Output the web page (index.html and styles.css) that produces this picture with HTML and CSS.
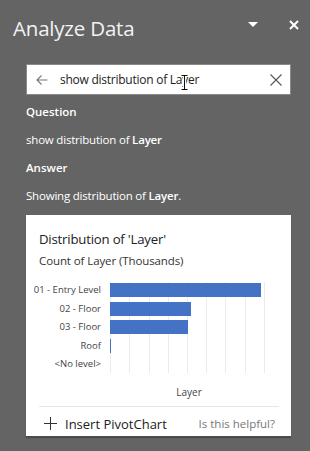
FILE: index.html
```html
<!DOCTYPE html>
<html lang="en">
<head>
    <meta charset="UTF-8">
    <title>Analyze Data</title>
    <link rel="stylesheet" href="styles.css">
</head>
<body>
    <div class="pane">
        <div class="pane-header">
            <h1 class="pane-title">Analyze Data</h1>
            <span class="caret"></span>
            <svg class="close" width="10" height="10" viewBox="0 0 10 10">
                <path d="M1 1 L9 9 M9 1 L1 9" stroke="#fff" stroke-width="2"/>
            </svg>
        </div>

        <div class="search">
            <svg class="search-back" width="12" height="10" viewBox="0 0 12 10">
                <path d="M11.5 5 H1 M5.5 0.5 L1 5 L5.5 9.5" stroke="#777" stroke-width="1.1" fill="none"/>
            </svg>
            <span class="search-text">show distribution of Layer</span>
            <svg class="search-clear" width="12" height="12" viewBox="0 0 12 12">
                <path d="M0.5 0.5 L11.5 11.5 M11.5 0.5 L0.5 11.5" stroke="#555" stroke-width="1.1"/>
            </svg>
            <!-- mouse cursor over the text -->
            <svg class="ibeam" width="7" height="15" viewBox="0 0 7 15">
                <path d="M0 0.5 H7 M0 14.5 H7 M3.5 0.5 V14.5" stroke="#fff" stroke-width="3"/>
                <path d="M0.5 0.5 H6.5 M0.5 14.5 H6.5 M3.5 0.5 V14.5" stroke="#111" stroke-width="1"/>
            </svg>
        </div>

        <div class="qa">
            <p class="qa-label">Question</p>
            <p class="qa-text">show distribution of <b>Layer</b></p>
            <p class="qa-label">Answer</p>
            <p class="qa-text">Showing distribution of <b>Layer</b>.</p>
        </div>

        <div class="card">
            <div class="card-title">Distribution of 'Layer'</div>
            <div class="card-subtitle">Count of Layer (Thousands)</div>

            <div class="chart">
                <div class="chart-labels">
                    <span>01 - Entry Level</span>
                    <span>02 - Floor</span>
                    <span>03 - Floor</span>
                    <span>Roof</span>
                    <span>&lt;No level&gt;</span>
                </div>
                <div class="chart-plot">
                    <div class="bar-row"><div class="bar" style="width: 151px"></div></div>
                    <div class="bar-row"><div class="bar" style="width: 81px"></div></div>
                    <div class="bar-row"><div class="bar" style="width: 78px"></div></div>
                    <div class="bar-row"><div class="bar" style="width: 1px"></div></div>
                    <div class="bar-row"></div>
                </div>
            </div>
            <div class="axis-title">Layer</div>

            <div class="card-footer">
                <span class="insert">
                    <svg width="13" height="13" viewBox="0 0 13 13">
                        <path d="M6.5 0 V13 M0 6.5 H13" stroke="#333" stroke-width="1"/>
                    </svg>
                    Insert PivotChart
                </span>
                <span class="helpful">Is this helpful?</span>
            </div>
        </div>
    </div>
</body>
</html>
```

FILE: styles.css
```css
* {
    margin: 0;
    padding: 0;
    box-sizing: border-box;
}

body {
    font-family: 'Open Sans', 'Noto Sans', sans-serif;
    background: #646464;
    width: 310px;
    height: 451px;
    overflow: hidden;
    color: #fff;
}

.pane-header {
    display: flex;
    align-items: center;
    height: 56px;
    padding: 0 11px 0 13px;
}

.pane-title {
    flex: 1;
    font-size: 20.5px;
    font-weight: 400;
    color: #f2f2f2;
    letter-spacing: -0.2px;
}

.caret {
    width: 0;
    height: 0;
    border-left: 5px solid transparent;
    border-right: 5px solid transparent;
    border-top: 5px solid #fff;
    margin-right: 31px;
    margin-top: -7px;
}

.close {
    margin-top: -6px;
}

.search {
    position: relative;
    display: flex;
    align-items: center;
    margin: 8px 19px 0 26px;
    height: 31px;
    background: #fff;
    border: 1px solid #8a8a8a;
    padding: 0 8px 0 9px;
}

.search-back {
    margin-right: 12px;
}

.search-text {
    flex: 1;
    font-size: 12px;
    color: #222;
    letter-spacing: -0.25px;
}

.ibeam {
    position: absolute;
    left: 154px;
    top: 10px;
}

.qa {
    padding: 3px 26px 0;
}

.qa-label {
    font-size: 11.5px;
    font-weight: 600;
    line-height: 28px;
    color: #fff;
}

.qa-text {
    font-size: 11.5px;
    line-height: 28px;
    color: #fff;
    letter-spacing: -0.2px;
}

.qa-text b {
    font-weight: 600;
}

.card {
    margin: 5px 19px 0 26px;
    height: 221px;
    background: #fff;
    color: #333;
    box-shadow: 0 2px 1px rgba(0, 0, 0, 0.25);
    padding: 14px 12px 0 13px;
}

.card-title {
    font-size: 13.2px;
    color: #222;
    line-height: 20px;
    letter-spacing: -0.2px;
}

.card-subtitle {
    font-size: 11.5px;
    color: #333;
    line-height: 20px;
    margin-top: 2px;
    letter-spacing: -0.1px;
}

.chart {
    display: flex;
    margin-top: 11px;
}

.chart-labels {
    width: 62px;
    display: flex;
    flex-direction: column;
    align-items: flex-end;
    font-size: 9.5px;
    color: #444;
    padding-top: 1px;
}

.chart-labels span {
    height: 18.5px;
    line-height: 14px;
    white-space: nowrap;
}

.chart-plot {
    margin-left: 9px;
    width: 174px;
    height: 91px;
    padding-top: 1px;
    background: repeating-linear-gradient(90deg, #ebebeb 0, #ebebeb 1px, transparent 1px, transparent 19.25px);
}

.bar-row {
    height: 18.5px;
}

.bar {
    height: 14px;
    background: #4472c4;
}

.axis-title {
    text-align: center;
    font-size: 10px;
    color: #444;
    margin-top: 9px;
    padding-left: 60px;
}

.card-footer {
    display: flex;
    justify-content: space-between;
    align-items: center;
    border-top: 1px solid #e6e6e6;
    margin-top: 7px;
    padding: 8px 0 0 5px;
}

.insert {
    display: flex;
    align-items: center;
    gap: 8px;
    font-size: 13px;
    color: #222;
}

.helpful {
    font-size: 11.5px;
    color: #777;
    margin-right: 4px;
}
```
